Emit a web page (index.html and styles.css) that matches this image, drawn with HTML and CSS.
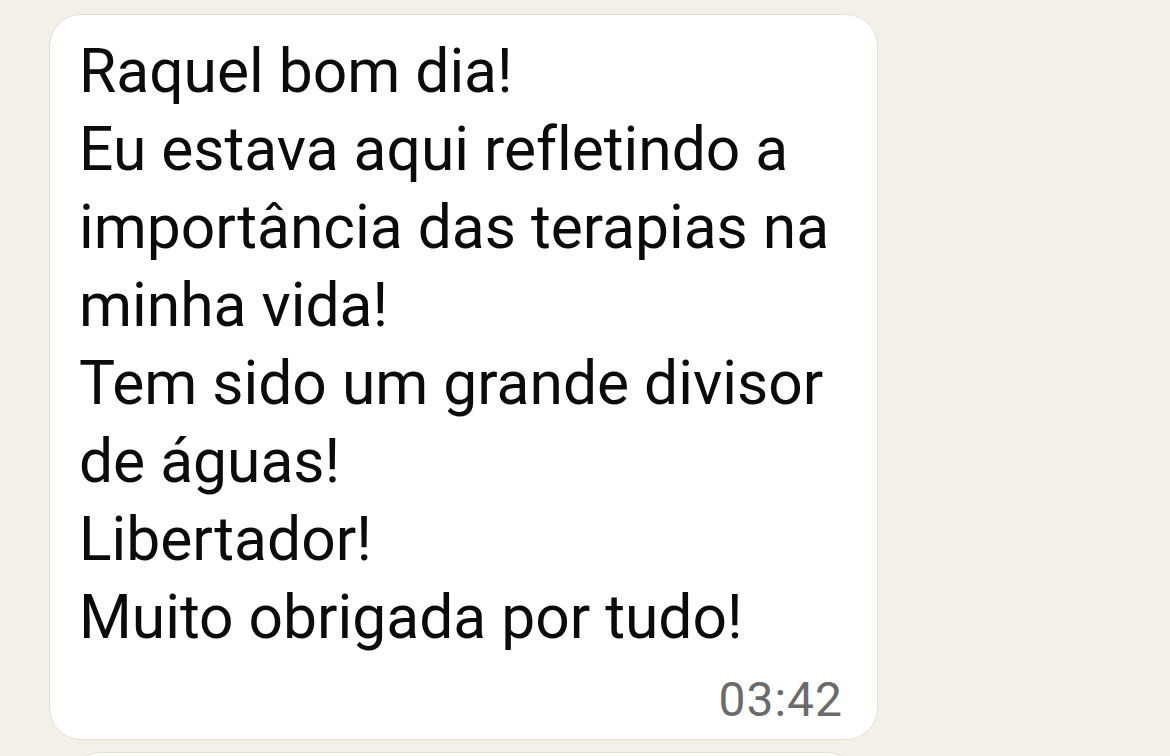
FILE: index.html
```html
<!DOCTYPE html>
<html lang="pt">
<head>
<meta charset="utf-8">
<link rel="stylesheet" href="styles.css">
</head>
<body>
<div class="chat">
  <div class="bubble">
    <div class="text">
      <div class="line">Raquel bom dia!</div>
      <div class="line">Eu estava aqui refletindo a</div>
      <div class="line">importância das terapias na</div>
      <div class="line">minha vida!</div>
      <div class="line">Tem sido um grande divisor</div>
      <div class="line">de águas!</div>
      <div class="line">Libertador!</div>
      <div class="line">Muito obrigada por tudo!</div>
    </div>
    <div class="meta"><span class="time">03:42</span></div>
  </div>
  <div class="bubble next"></div>
</div>
</body>
</html>
```
FILE: styles.css
```css
html, body {
  margin: 0;
  padding: 0;
  background: #f3f0ea;
  height: 100%;
  overflow: hidden;
}
.chat {
  display: flex;
  flex-direction: column;
  gap: 12px;
  padding: 14px 0 0 49px;
}
.bubble {
  width: 829px;
  box-sizing: border-box;
  background: #ffffff;
  border: 1px solid #e4dfd6;
  border-radius: 32px;
  padding: 18px 34px 11px 29px;
  font-family: "Roboto", "Liberation Sans", sans-serif;
  color: #0b0b0b;
  font-variant-ligatures: none;
}
.text {
  font-size: 60.5px;
  line-height: 78px;
  white-space: nowrap;
}
.meta {
  display: flex;
  justify-content: flex-end;
  margin-top: 15px;
}
.time {
  font-size: 48px;
  line-height: 56px;
  color: #6b6b6b;
  letter-spacing: 1px;
}
.bubble.next {
  margin-left: 20px;
  width: 790px;
  height: 100px;
}
```
